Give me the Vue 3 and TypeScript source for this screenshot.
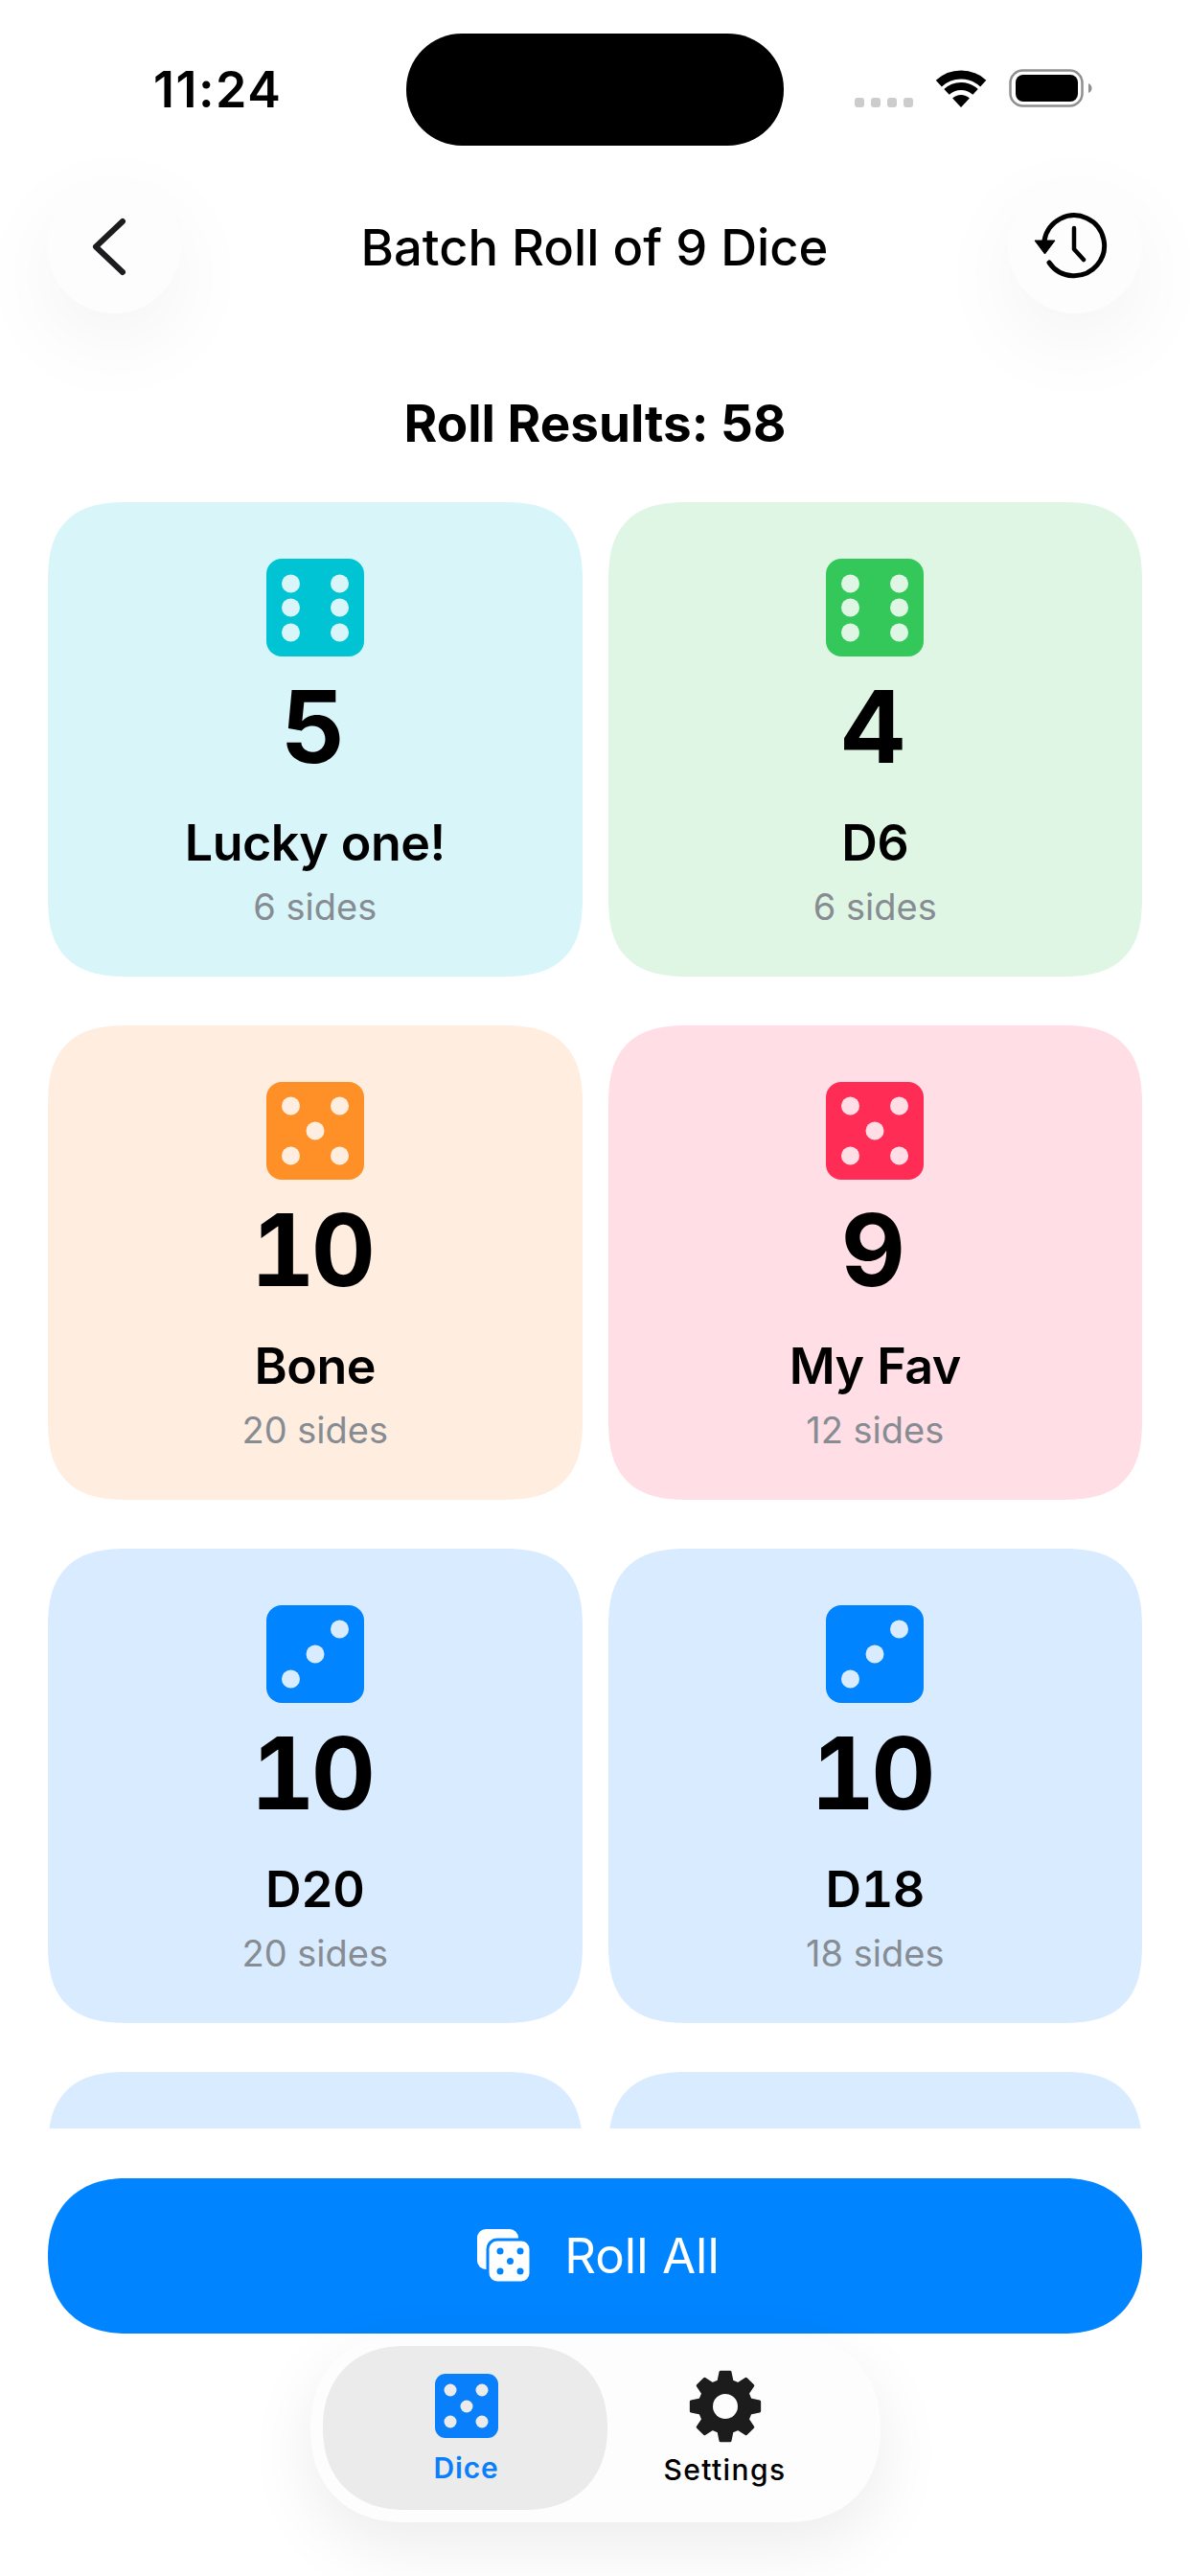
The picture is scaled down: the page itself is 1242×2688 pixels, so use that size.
<script setup lang="ts">
interface Die {
  value?: number
  name?: string
  sides?: number
  face: number
  tone: string
}

// the last row sits behind the clip, only the card tops show
const dice: Die[] = [
  { value: 5, name: 'Lucky one!', sides: 6, face: 6, tone: 'teal' },
  { value: 4, name: 'D6', sides: 6, face: 6, tone: 'green' },
  { value: 10, name: 'Bone', sides: 20, face: 5, tone: 'orange' },
  { value: 9, name: 'My Fav', sides: 12, face: 5, tone: 'pink' },
  { value: 10, name: 'D20', sides: 20, face: 3, tone: 'blue' },
  { value: 10, name: 'D18', sides: 18, face: 3, tone: 'blue' },
  { face: 3, tone: 'blue' },
  { face: 3, tone: 'blue' },
]

const pips: Record<number, [number, number][]> = {
  3: [[25.5, 77], [51, 51], [76.5, 25]],
  5: [[25.5, 25], [76.5, 25], [51, 51], [25.5, 77], [76.5, 77]],
  6: [[25.5, 26], [76.5, 26], [25.5, 51], [76.5, 51], [25.5, 77], [76.5, 77]],
}

// eight teeth, corners softened by the round stroke join
function gearPath(): string {
  const pt = (deg: number, r: number) => {
    const a = (deg * Math.PI) / 180
    return `${(38 + r * Math.cos(a)).toFixed(2)} ${(38 + r * Math.sin(a)).toFixed(2)}`
  }
  let d = ''
  for (let i = 0; i < 8; i++) {
    const a = i * 45 - 90
    d += `${i ? 'L' : 'M'}${pt(a - 15, 27)} L${pt(a - 8, 36)} L${pt(a + 8, 36)} L${pt(a + 15, 27)} `
  }
  return d + 'Z M38 25 A13 13 0 1 0 38 51 A13 13 0 1 0 38 25 Z'
}
const gear = gearPath()
</script>

<template>
  <div class="screen">
    <div class="status">
      <div class="status__time">11:24</div>
      <div class="status__island"></div>
      <svg class="status__icons" width="248" height="44" viewBox="0 0 248 44">
        <g fill="#cccccc">
          <rect x="0" y="32" width="10" height="10" rx="3" />
          <rect x="17" y="32" width="10" height="10" rx="3" />
          <rect x="34" y="32" width="10" height="10" rx="3" />
          <rect x="51" y="32" width="10" height="10" rx="3" />
        </g>
        <path d="M87.8 17.1A34 34 0 0 1 134.2 17.1" fill="none" stroke="#000" stroke-width="9" />
        <path d="M96 25.9A22 22 0 0 1 126 25.9" fill="none" stroke="#000" stroke-width="8" />
        <path d="M111 42L102.1 32.5A13 13 0 0 1 119.9 32.5Z" fill="#000" />
        <rect x="162.5" y="3.5" width="75" height="37" rx="13" fill="none" stroke="#8f8f8f" stroke-width="2.5" />
        <rect x="168" y="8" width="65" height="28" rx="8" fill="#000" />
        <path d="M244 17C246.500 18 247.500 20 247.500 22C247.500 24 246.500 26 244 27Z" fill="#8f8f8f" />
      </svg>
    </div>

    <header class="nav">
      <button class="nav__btn">
        <svg width="140" height="140" viewBox="0 0 140 140">
          <path d="M79 44L51 70.500L79 97" fill="none" stroke="#1c1c1e" stroke-width="6" stroke-linecap="round" stroke-linejoin="round" />
        </svg>
      </button>
      <div class="nav__title">Batch Roll of 9 Dice</div>
      <button class="nav__btn">
        <svg width="140" height="140" viewBox="0 0 140 140">
          <path d="M43 87A31.500 31.500 0 1 0 38 64" fill="none" stroke="#000" stroke-width="5" stroke-linecap="round" />
          <path d="M28 64H49L38.500 78Z" fill="#000" stroke="#000" stroke-width="1" stroke-linejoin="round" />
          <path d="M69 51V73L79 84" fill="none" stroke="#000" stroke-width="4.500" stroke-linecap="round" stroke-linejoin="round" />
        </svg>
      </button>
    </header>

    <div class="summary">Roll Results: 58</div>

    <div class="list">
      <div class="grid">
        <article v-for="(die, n) in dice" :key="n" class="card" :class="`card--${die.tone}`">
          <template v-if="die.name">
            <svg class="card__die" width="102" height="102" viewBox="0 0 102 102">
              <rect class="card__face" width="102" height="102" rx="16" />
              <circle v-for="(p, i) in pips[die.face]" :key="i" class="card__pip" :cx="p[0]" :cy="p[1]" r="9.500" />
            </svg>
            <div class="card__value">{{ die.value }}</div>
            <div class="card__name">{{ die.name }}</div>
            <div class="card__sides">{{ die.sides }} sides</div>
          </template>
        </article>
      </div>
    </div>

    <button class="roll">
      <svg width="56" height="56" viewBox="0 0 56 56">
        <rect x="0" y="0" width="43" height="42" rx="9" fill="#fff" />
        <rect x="11" y="11" width="45" height="45" rx="10" fill="#fff" stroke="#0084ff" stroke-width="3" />
        <g fill="#0084ff">
          <circle cx="24" cy="23" r="3.500" />
          <circle cx="45" cy="23" r="3.500" />
          <circle cx="34.500" cy="33.500" r="3.500" />
          <circle cx="24" cy="44" r="3.500" />
          <circle cx="45" cy="44" r="3.500" />
        </g>
      </svg>
      <span>Roll All</span>
    </button>

    <nav class="tabs">
      <div class="tab tab--active">
        <svg width="66" height="67" viewBox="0 0 66 67">
          <rect width="66" height="67" rx="11" fill="#0a7ffb" />
          <g fill="#ebebeb">
            <circle cx="16" cy="17" r="6.500" />
            <circle cx="49" cy="17" r="6.500" />
            <circle cx="33" cy="34" r="6.500" />
            <circle cx="16" cy="50" r="6.500" />
            <circle cx="49" cy="50" r="6.500" />
          </g>
        </svg>
        <span class="tab__label">Dice</span>
      </div>
      <div class="tab">
        <svg width="76" height="76" viewBox="0 0 76 76">
          <path :d="gear" fill="#1c1c1c" fill-rule="evenodd" stroke="#1c1c1c" stroke-width="3" stroke-linejoin="round" />
          <circle cx="38" cy="38" r="13" fill="#fdfdfd" />
        </svg>
        <span class="tab__label">Settings</span>
      </div>
    </nav>
  </div>
</template>

<style>
html, body { margin: 0; background: #fff; }
</style>

<style scoped>
.screen {
  width: 1242px;
  height: 2688px;
  overflow: hidden;
  display: flex;
  flex-direction: column;
  background: #fff;
  color: #000;
  font-family: Inter, 'Liberation Sans', sans-serif;
}
button {
  border: 0;
  padding: 0;
  font: inherit;
  cursor: pointer;
}

.status {
  height: 187px;
  flex: none;
  display: grid;
  grid-template-columns: 424px 394px 1fr;
  align-items: start;
}
.status__time {
  padding: 59px 0 0 160px;
  font-size: 52px;
  line-height: 70px;
  font-weight: 600;
  letter-spacing: 1.5px;
}
.status__island {
  margin-top: 35px;
  height: 117px;
  border-radius: 58px;
  background: #000;
}
.status__icons {
  margin: 70px 0 0 74px;
}

.nav {
  height: 140px;
  flex: none;
  padding: 0 50px 0 49px;
  display: flex;
  align-items: center;
  justify-content: space-between;
}
.nav__btn {
  width: 140px;
  height: 140px;
  border-radius: 50%;
  background: #fdfdfd;
  box-shadow: 0 30px 90px rgba(0, 0, 0, 0.05);
}
.nav__btn svg { display: block; }
.nav__title {
  padding-top: 2px;
  font-size: 52.5px;
  line-height: 70px;
  font-weight: 500;
}

.summary {
  margin-top: 82px;
  font-size: 53px;
  line-height: 66px;
  font-weight: 700;
  text-align: center;
  flex: none;
}

.list {
  margin-top: 49px;
  height: 1697px;
  flex: none;
  overflow: hidden;
  padding: 0 50px;
}
.grid {
  display: grid;
  grid-template-columns: 1fr 1fr;
  column-gap: 27px;
  row-gap: 51px;
}
.card {
  height: 495px;
  box-sizing: border-box;
  padding-top: 59px;
  border-radius: 84px;
  corner-shape: superellipse(1.4);
  display: flex;
  flex-direction: column;
  align-items: center;
  text-align: center;
}
.card--teal { background: #d8f6f9; --face: #00c4d3; }
.card--green { background: #e0f6e5; --face: #34c85a; }
.card--orange { background: #ffeee0; --face: #ff9027; }
.card--pink { background: #ffdee5; --face: #ff2d55; }
.card--blue { background: #d9ebff; --face: #0084ff; }
.card__die { display: block; flex: none; }
.card__face { fill: var(--face); }
.card--teal .card__pip { fill: #d8f6f9; }
.card--green .card__pip { fill: #e0f6e5; }
.card--orange .card__pip { fill: #ffeee0; }
.card--pink .card__pip { fill: #ffdee5; }
.card--blue .card__pip { fill: #d9ebff; }
.card__value {
  margin-right: 8px;
  font-size: 104px;
  line-height: 146px;
  font-weight: 700;
  font-variant-numeric: tabular-nums;
  letter-spacing: -4px;
}
.card__name {
  margin-top: 14px;
  font-size: 52px;
  line-height: 70px;
  font-weight: 600;
  font-variant-numeric: tabular-nums;
  letter-spacing: -0.5px;
}
.card__sides {
  margin-top: 6px;
  font-size: 38px;
  line-height: 50px;
  color: #868c92;
}

.roll {
  margin: 52px 50px 0;
  height: 162px;
  flex: none;
  box-sizing: border-box;
  padding: 0 0 2px 7px;
  border-radius: 81px;
  corner-shape: superellipse(1.15);
  background: #0084ff;
  color: #fff;
  display: flex;
  align-items: center;
  justify-content: center;
  gap: 35px;
  font-size: 51px;
  font-weight: 400;
}
.roll svg { display: block; margin-top: 2px; }

.tabs {
  align-self: center;
  margin-top: 2px;
  width: 595px;
  height: 195px;
  box-sizing: border-box;
  flex: none;
  padding: 11px 13px 13px;
  border-radius: 98px;
  corner-shape: superellipse(1.15);
  background: #fdfdfd;
  box-shadow: 0 24px 70px rgba(0, 0, 0, 0.08);
  display: grid;
  grid-template-columns: 297px 246px;
}
.tab {
  display: flex;
  flex-direction: column;
  align-items: center;
  padding-top: 25px;
  border-radius: 86px;
  corner-shape: superellipse(1.15);
  font-size: 30px;
}
.tab--active {
  background: #ebebeb;
  padding-top: 29px;
  padding-left: 3px;
  color: #0a7ffb;
}
.tab svg { display: block; flex: none; }
.tab__label {
  margin-top: 8px;
  line-height: 40px;
  font-weight: 500;
  letter-spacing: 1.4px;
}
.tab--active .tab__label {
  margin-top: 11px;
  font-weight: 600;
  letter-spacing: 0.8px;
}
</style>
